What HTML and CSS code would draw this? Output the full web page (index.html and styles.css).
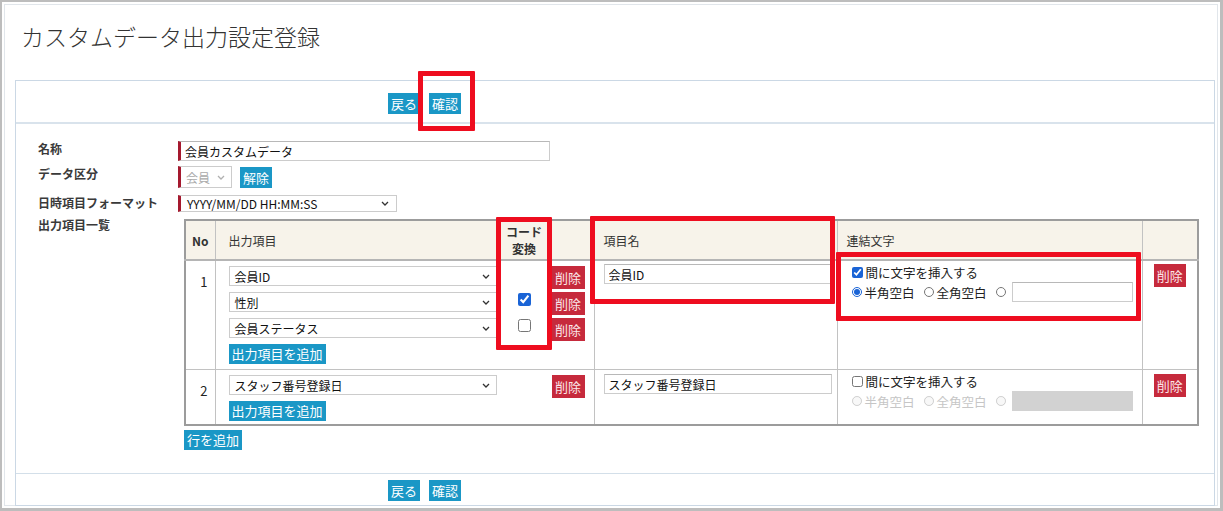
FILE: index.html
```html
<html>
<head>
<title>カスタムデータ出力設定登録</title>
<link rel="stylesheet" href="styles.css">
</head>
<body>
<div class="frame">
<div class="inner">
<h1 class="title">カスタムデータ出力設定登録</h1>

<div class="panel">
	<div class="bar bar-top">
		<button class="btn">戻る</button>
		<button class="btn">確認</button>
	</div>

	<div class="form">
		<div class="row">
			<div class="label">名称</div>
			<input class="text req name-input" type="text" value="会員カスタムデータ">
		</div>
		<div class="row row-kind">
			<div class="label">データ区分</div>
			<div class="select req kind-select disabled">
				<span>会員</span>
				<svg class="chev" viewBox="0 0 8 5" width="8" height="5"><path d="M1 1l3 3 3-3" fill="none" stroke="#b0b0b0" stroke-width="1.3"/></svg>
			</div>
			<button class="btn btn-release">解除</button>
		</div>
		<div class="row row-format">
			<div class="label">日時項目フォーマット</div>
			<div class="select req format-select">
				<span>YYYY/MM/DD HH:MM:SS</span>
				<svg class="chev" viewBox="0 0 8 5" width="8" height="5"><path d="M1 1l3 3 3-3" fill="none" stroke="#333" stroke-width="1.3"/></svg>
			</div>
		</div>
		<div class="row row-list">
			<div class="label label-list">出力項目一覧</div>
			<div class="list">
				<table class="items">
					<colgroup>
						<col class="c-no"><col class="c-out"><col class="c-name"><col class="c-join"><col class="c-del">
					</colgroup>
					<tr class="head">
						<th class="no">No</th>
						<th>
							<div class="out-grid out-head">
								<span>出力項目</span>
								<span class="code-head">コード<br>変換</span>
								<span></span>
							</div>
						</th>
						<th class="pad-name">項目名</th>
						<th class="pad-join">連結文字</th>
						<th></th>
					</tr>
					<tr class="r1">
						<td class="no">1</td>
						<td class="out">
							<div class="out-grid">
								<div class="select sel"><span>会員ID</span><svg class="chev" viewBox="0 0 8 5" width="8" height="5"><path d="M1 1l3 3 3-3" fill="none" stroke="#333" stroke-width="1.3"/></svg></div>
								<span></span>
								<button class="btn btn-del">削除</button>

								<div class="select sel"><span>性別</span><svg class="chev" viewBox="0 0 8 5" width="8" height="5"><path d="M1 1l3 3 3-3" fill="none" stroke="#333" stroke-width="1.3"/></svg></div>
								<input class="code-check" type="checkbox" checked>
								<button class="btn btn-del">削除</button>

								<div class="select sel"><span>会員ステータス</span><svg class="chev" viewBox="0 0 8 5" width="8" height="5"><path d="M1 1l3 3 3-3" fill="none" stroke="#333" stroke-width="1.3"/></svg></div>
								<input class="code-check" type="checkbox">
								<button class="btn btn-del">削除</button>

								<button class="btn btn-add">出力項目を追加</button>
							</div>
						</td>
						<td class="name"><input class="text item-input" type="text" value="会員ID"></td>
						<td class="join">
							<label class="join-line"><input class="chk" type="checkbox" checked>間に文字を挿入する</label>
							<div class="join-opts">
								<input class="rad" type="radio" name="j1" checked><span class="opt">半角空白</span>
								<input class="rad" type="radio" name="j1"><span class="opt">全角空白</span>
								<input class="rad" type="radio" name="j1">
								<input class="text join-input" type="text" value="">
							</div>
						</td>
						<td class="del"><button class="btn btn-del">削除</button></td>
					</tr>
					<tr class="r2">
						<td class="no">2</td>
						<td class="out">
							<div class="out-grid">
								<div class="select sel"><span>スタッフ番号登録日</span><svg class="chev" viewBox="0 0 8 5" width="8" height="5"><path d="M1 1l3 3 3-3" fill="none" stroke="#333" stroke-width="1.3"/></svg></div>
								<span></span>
								<button class="btn btn-del">削除</button>
								<button class="btn btn-add">出力項目を追加</button>
							</div>
						</td>
						<td class="name"><input class="text item-input" type="text" value="スタッフ番号登録日"></td>
						<td class="join">
							<label class="join-line"><input class="chk" type="checkbox">間に文字を挿入する</label>
							<div class="join-opts off">
								<input class="rad" type="radio" name="j2" disabled><span class="opt">半角空白</span>
								<input class="rad" type="radio" name="j2" disabled><span class="opt">全角空白</span>
								<input class="rad" type="radio" name="j2" disabled>
								<input class="text join-input" type="text" value="" disabled>
							</div>
						</td>
						<td class="del"><button class="btn btn-del">削除</button></td>
					</tr>
				</table>
				<button class="btn btn-row">行を追加</button>
			</div>
		</div>
	</div>

	<div class="bar bar-bottom">
		<button class="btn">戻る</button>
		<button class="btn">確認</button>
	</div>
</div>

</div>
</div>

<!-- red callouts drawn over the screen -->
<div class="mark mark-confirm"></div>
<div class="mark mark-code"></div>
<div class="mark mark-name"></div>
<div class="mark mark-join"></div>
</body>
</html>
```

FILE: styles.css
```css
body {margin: 0; position: relative; background: #ffffff; color: #222222; font-family: "Noto Sans CJK JP", "Noto Sans", sans-serif; font-size: 12px}

.frame {width: 1223px; height: 511px; box-sizing: border-box; border: 2px solid #bdbdbd; border-right-width: 3px; border-bottom-width: 3px; padding: 2px; overflow: hidden}
.inner {height: 100%; box-sizing: border-box; border: 1px solid #e1e6eb; padding: 16px 0 0 10px}
.title {margin: 0 0 29px 6px; font-size: 23px; font-weight: 300; line-height: 30px; color: #333333}

.panel {width: 1200px; box-sizing: border-box; border: 1px solid #cbd8e5}
.bar {display: flex; gap: 9px; padding-left: 372px}
.bar-top {padding-top: 12px; padding-bottom: 8px; border-bottom: 2px solid #d9e3ec}
.bar-bottom {padding-top: 6px; padding-bottom: 4px; border-top: 1px solid #d3dfe9}

.btn {font-family: inherit; font-size: 13px; height: 21px; line-height: 21px; padding: 0 3px; border: 0; background: #1a97c6; color: #ffffff; cursor: pointer; white-space: nowrap}
.btn-del {background: #c62a3c; height: 23px; line-height: 23px; color: #fbe7ea}
.btn-add {height: 20px; line-height: 20px; grid-column: 1 / 2; justify-self: start; align-self: start}
.btn-row {height: 20px; line-height: 20px; margin: 4px 0 0 6px}
.btn-release {margin-left: 8px; height: 21px; margin-top: 1px}

/* form */
.form {padding: 17px 0 23px 22px}
.row {display: flex; align-items: flex-start}
.row-kind {margin-top: 5px}
.row-format {margin-top: 7px}
.row-list {margin-top: 7px}
.label {width: 140px; flex: none; font-weight: bold; font-size: 12px; line-height: 16px; color: #3a3a3a}
.label-list {margin-top: -2px}

.text {font-family: inherit; font-size: 12px; color: #111111; box-sizing: border-box; height: 20px; border: 1px solid #cccccc; border-top-color: #b8b8b8; padding: 0 4px; margin: 0; background: #ffffff; outline: none}
.name-input {width: 372px}

.select {display: flex; align-items: center; justify-content: space-between; box-sizing: border-box; height: 20px; border: 1px solid #cccccc; background: #ffffff; padding: 0 6px 0 5px; font-size: 12px; color: #111111; white-space: nowrap}
.chev {flex: none}
.kind-select {width: 54px; height: 22px; padding-left: 5px}
.disabled {color: #aaaaaa}
.format-select {width: 219px; height: 17px; padding-left: 6px; padding-right: 7px}
.req {border-left: 3px solid #a5192e}

/* item table */
.items {width: 1013px; margin-left: 6px; table-layout: fixed; border-collapse: collapse; border: 2px solid #9c9c9c}
.c-no {width: 30px}
.c-out {width: 379px}
.c-name {width: 243px}
.c-join {width: 305px}
.c-del {width: 56px}
.items th, .items td {border: 1px solid #c2c2c2; padding: 0; vertical-align: top}
.items th {background: #f7f3ea; height: 40px; vertical-align: middle; text-align: left; font-weight: normal; font-size: 12px; color: #333333; border-bottom: 2px solid #b5b5b5}
.items th.no {text-align: center; font-weight: bold}
.pad-name {padding-left: 9px !important}
.pad-join {padding-left: 9px !important}

.out-grid {display: grid; grid-template-columns: 268px 55px 33px; grid-auto-rows: auto; row-gap: 3px; padding-left: 13px}
.out-head {align-items: center}
.code-head {text-align: center; font-weight: bold; line-height: 17px}
.items td.out {padding-top: 5px; padding-bottom: 3px}
.items .r1 td.out {padding-bottom: 5px}
.sel {width: 268px; align-self: start}
.code-check {width: 13px; height: 13px; margin: 1px 0 0; justify-self: center; align-self: start; accent-color: #1a64d6}

.items td.no {text-align: right; padding: 11px 7px 0 0; font-size: 13px; line-height: 20px}
.items td.name {padding: 3px 6px 0 9px}
.r2 td.name {padding-top: 4px}
.item-input {width: 228px}

.items td.join {padding: 2px 3px 0 14px; font-size: 12.5px}
.join-line {display: flex; align-items: center; height: 18px; color: #222222; white-space: nowrap}
.chk {flex: none; width: 11px; height: 11px; margin: 0 3px 0 0; accent-color: #1a64d6}
.join-opts {display: flex; align-items: center; height: 20px; margin-top: 1px; white-space: nowrap}
.rad {flex: none; width: 10px; height: 10px; margin: 0 3px 0 0; accent-color: #1a64d6}
.opt {flex: none; margin-right: 9px}
.join-input {flex: none; width: 121px; margin-left: 3px}
.off {color: #c6c6c6}
.off .join-input {background: #d2d2d2; border-color: #d2d2d2}

.items td.del {text-align: center; padding-top: 3px}
.r2 td.del {padding-top: 4px}

/* callout boxes */
.mark {position: absolute; box-sizing: border-box; border: 5px solid #ee0d1f; border-radius: 1px}
.mark-confirm {left: 418px; top: 71px; width: 57px; height: 60px}
.mark-code {left: 496px; top: 217px; width: 56px; height: 133px}
.mark-name {left: 590px; top: 216px; width: 245px; height: 88px}
.mark-join {left: 836px; top: 252px; width: 305px; height: 69px}
```
